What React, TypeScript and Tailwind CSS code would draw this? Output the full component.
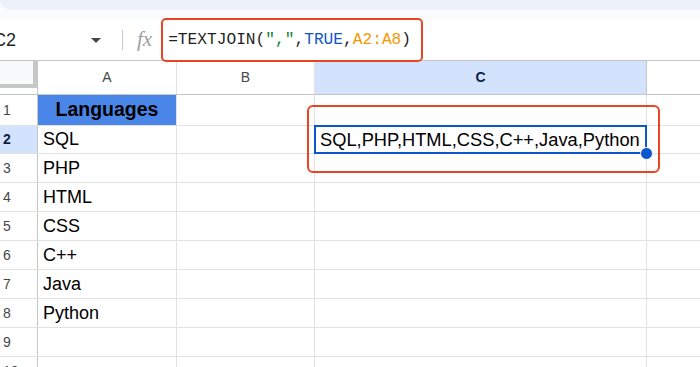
import React from "react";

const languages = ["SQL", "PHP", "HTML", "CSS", "C++", "Java", "Python", "", ""];
// row heights in px, border included (rows 2..10)
const rowHeights = ["h-[28px]", "h-[29px]", "h-[29px]", "h-[29px]", "h-[29px]", "h-[29px]", "h-[29px]", "h-[29px]", "h-[29px]"];

function FormulaBar() {
  return (
    <div className="flex h-[41px] items-center border-b border-[#c4c7c5] bg-white">
      <div className="flex w-[122px] items-center justify-between pr-[21px]">
        <span className="ml-[-7px] text-[18px] text-[#1f1f1f]">C2</span>
        <span className="mt-[1px] h-0 w-0 border-x-[5px] border-t-[5px] border-x-transparent border-t-[#444746]" />
      </div>
      <div className="h-[20px] w-px bg-[#c4c7c5]" />
      <span className="ml-[14px] font-['Liberation_Serif',serif] text-[21px] italic text-[#9aa0a6]">fx</span>
      <span className="ml-[16px] whitespace-nowrap font-['Liberation_Mono',monospace] text-[16.2px] text-[#1f1f1f]">
        =TEXTJOIN(<span className="text-[#188038]">","</span>,<span className="text-[#1155cc]">TRUE</span>,
        <span className="text-[#f29900]">A2:A8</span>)
      </span>
    </div>
  );
}

function HeaderRow() {
  return (
    <div className="flex h-[34px] border-b border-[#c4c7c5] text-[14px] text-[#444746]">
      <div className="w-[38px] shrink-0 border-r border-[#c4c7c5]">
        <div className="h-[27px] border-b-4 border-r-4 border-[#c7c7c7] bg-[#f8f9fa]" />
      </div>
      <div className="flex w-[139px] shrink-0 items-center justify-center border-r border-[#e1e1e1]">A</div>
      <div className="flex w-[138px] shrink-0 items-center justify-center border-r border-[#e1e1e1]">B</div>
      <div className="flex w-[332px] shrink-0 items-center justify-center border-r border-[#c4c7c5] bg-[#d3e3fd] font-bold text-[#0b1f45]">
        C
      </div>
      <div className="flex-1" />
    </div>
  );
}

function Row({ n, height, children, selected, first }: { n: number; height: string; children?: React.ReactNode; selected?: boolean; first?: boolean }) {
  return (
    <div className={`flex ${height} border-b border-[#e1e1e1]`}>
      <div
        className={`flex w-[38px] shrink-0 items-center border-r border-[#c4c7c5] pl-[3px] text-[14px] ${
          selected ? "bg-[#d3e3fd] font-bold text-[#0b1f45]" : "text-[#444746]"
        }`}
      >
        {n}
      </div>
      {first ? (
        <div className="flex w-[139px] shrink-0 items-center justify-center border-r border-[#e1e1e1] bg-[#4a86e8] text-[19.5px] font-bold text-black">
          Languages
        </div>
      ) : (
        <div className="flex w-[139px] shrink-0 items-center border-r border-[#e1e1e1] pl-[5px] text-[18px] text-black">{children}</div>
      )}
      <div className="w-[138px] shrink-0 border-r border-[#e1e1e1]" />
      <div className="relative flex w-[332px] shrink-0 items-center border-r border-[#e1e1e1]">
        {selected && (
          <>
            <span className="whitespace-nowrap pl-[5px] text-[18.3px] text-black">SQL,PHP,HTML,CSS,C++,Java,Python</span>
            <div className="absolute inset-[-1px] border-2 border-[#0b57d0]" />
            <div className="absolute bottom-[-7px] right-[-7px] z-10 h-[13px] w-[13px] rounded-full border border-white bg-[#0b57d0]" />
          </>
        )}
      </div>
      <div className="flex-1" />
    </div>
  );
}

export default function App() {
  return (
    <div className="relative h-[367px] w-[700px] overflow-hidden bg-white font-['Liberation_Sans',Arial,sans-serif]">
      <div className="h-[20px] bg-[#f9fbfd]">
        <div className="h-[10px] rounded-bl-[14px] bg-[#edf2fa]" />
      </div>
      <FormulaBar />
      <HeaderRow />
      <Row n={1} height="h-[31px]" first />
      {languages.map((lang, i) => (
        <Row key={i} n={i + 2} height={rowHeights[i]} selected={i === 0}>
          {lang}
        </Row>
      ))}

      {/* annotation boxes */}
      <div className="absolute left-[161px] top-[18px] h-[44px] w-[262px] rounded-[5px] border-2 border-[#ea4423]" />
      <div className="absolute left-[307px] top-[105px] h-[68px] w-[353px] rounded-[6px] border-2 border-[#ea4423]" />
    </div>
  );
}
